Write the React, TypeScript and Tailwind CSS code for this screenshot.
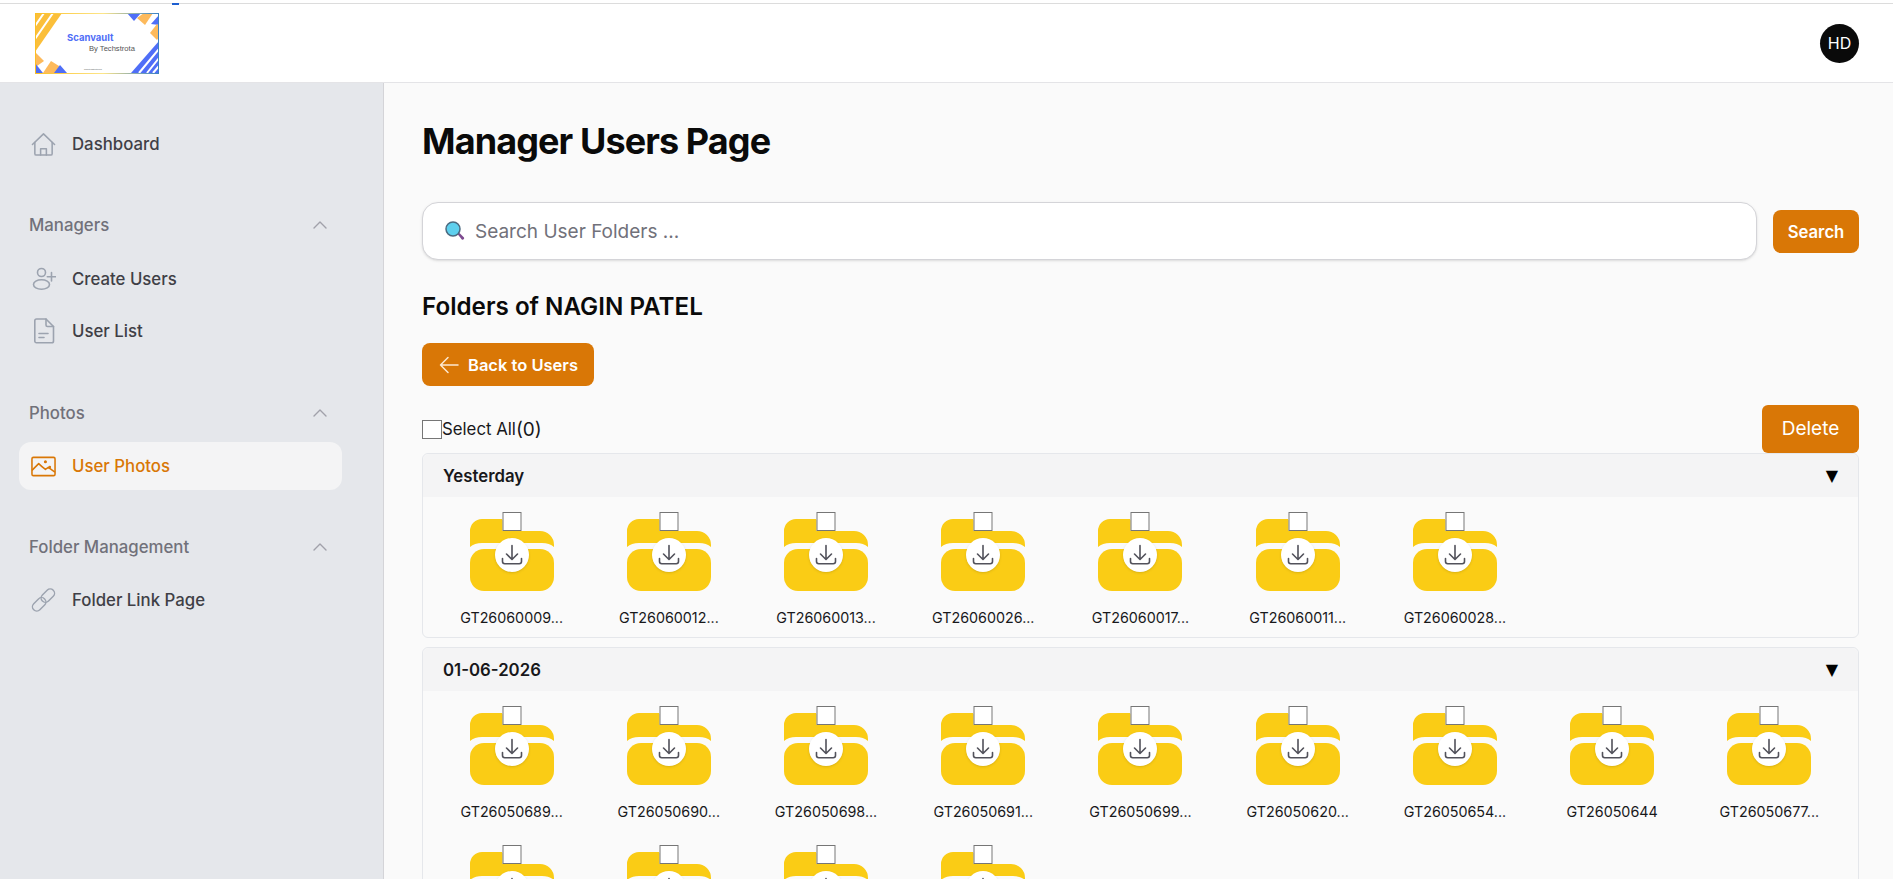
import { ChevronUp } from "lucide-react"

const INTER = "font-['Inter',sans-serif]"

function Logo() {
  return (
    <svg width="124" height="61" viewBox="0 0 124 61" className="block">
      <defs>
        <linearGradient id="edge" x1="0" y1="0" x2="1" y2="0">
          <stop offset="0" stopColor="#fbbf24" />
          <stop offset="0.55" stopColor="#fde68a" />
          <stop offset="1" stopColor="#3b82c4" />
        </linearGradient>
      </defs>
      <rect width="124" height="61" fill="white" />
      {/* yellow corner */}
      <path d="M0 0H27L0 39Z" fill="#fbbf3a" />
      <path d="M0 13L9 0M0 26L18 0" stroke="white" strokeWidth="2" />
      <path d="M0 39L9 48L2 53L0 51Z" fill="#fdba5c" />
      {/* bottom-left shapes */}
      <path d="M0 50L8 60H0Z" fill="#4f6ef7" />
      <path d="M8 60L16 48L24 53L28 60Z" fill="#fdba5c" />
      <path d="M19 60L25 52L32 60Z" fill="#4f6ef7" />
      {/* top-right shapes */}
      <path d="M92 0H106L99 8Z" fill="#4f6ef7" />
      <path d="M102 5L109 0H118L110 12Z" fill="#fdba5c" />
      <path d="M116 11L124 2V12Z" fill="#4f6ef7" />
      <path d="M115 20L122 11L124 13V24L122 27Z" fill="#fdba5c" />
      {/* blue corner */}
      <path d="M124 28V60H96Z" fill="#4f6ef7" />
      <path d="M124 36L104 60M124 45L112 60M124 53L118 60" stroke="white" strokeWidth="2" />
      <rect x="0.5" y="0.5" width="123" height="60" fill="none" stroke="url(#edge)" />
      <text x="32" y="28" fontSize="9.5" fontWeight="700" fill="#4f6ef7" fontFamily="Inter, sans-serif">Scanvault</text>
      <text x="54" y="38" fontSize="7.6" fontWeight="500" fill="#555" fontFamily="Liberation Sans, sans-serif">By Techstrota</text>
      <text x="49" y="57" fontSize="2" fill="#555" fontFamily="Liberation Sans, sans-serif">www.techstrota.com</text>
    </svg>
  )
}

function HomeIcon() {
  return (
    <svg width="26" height="25" viewBox="0 0 26 25" fill="none" stroke="#9ca3af" strokeWidth="1.6" strokeLinejoin="round" strokeLinecap="round">
      <path d="M1.5 12.5L13 1.5L24.5 12.5" />
      <path d="M4 10.5V22C4 23 4.6 23.5 5.5 23.5H20.5C21.4 23.5 22 23 22 22V10.5" />
      <path d="M10 23.5V17H16V23.5" />
    </svg>
  )
}

function UserPlusIcon() {
  return (
    <svg width="24" height="24" viewBox="0 0 24 24" fill="none" stroke="#9ca3af" strokeWidth="1.6" strokeLinecap="round">
      <circle cx="9.5" cy="5.5" r="4" />
      <ellipse cx="9.5" cy="17.5" rx="8" ry="4.7" />
      <path d="M19.5 5.500V14M15.300 9.700H23.500" />
    </svg>
  )
}

function FileIcon() {
  return (
    <svg width="24" height="26" viewBox="0 0 24 26" fill="none" stroke="#9ca3af" strokeWidth="1.6" strokeLinecap="round" strokeLinejoin="round">
      <path d="M4.500 1H14L21.500 8.500V23C21.500 24 20.800 24.800 19.800 24.800H4.500C3.500 24.800 2.800 24 2.800 23V2.800C2.800 1.800 3.500 1 4.500 1Z" />
      <path d="M14 1V7C14 8 14.800 8.500 15.500 8.500H21.500" />
      <path d="M7 15.500H16M7 19.500H12" />
    </svg>
  )
}

function PhotoIcon() {
  return (
    <svg width="26" height="21" viewBox="0 0 26 21" fill="none" stroke="#d97706" strokeWidth="1.6" strokeLinecap="round" strokeLinejoin="round">
      <rect x="1" y="1" width="24" height="19" rx="1.500" />
      <path d="M1.500 14L8 7.500C9 8.500 13 12 15 13.500M15 13.500L18 11.500L24.500 16" />
      <circle cx="15" cy="5.500" r="0.800" fill="#d97706" />
      <circle cx="19.500" cy="11" r="0.600" fill="#d97706" />
    </svg>
  )
}

function LinkIcon() {
  return (
    <svg width="26" height="26" viewBox="0 0 26 26" fill="none" stroke="#9ca3af" strokeWidth="1.5">
      <rect x="9.500" y="4" width="16" height="9" rx="4.500" transform="rotate(-45 17.500 8.500)" />
      <rect x="0.500" y="13" width="16" height="9" rx="4.500" transform="rotate(-45 8.500 17.500)" />
    </svg>
  )
}

function SearchEmoji() {
  return (
    <svg width="20" height="20" viewBox="0 0 20 20" className="shrink-0">
      <path d="M12.500 13L14.500 12L19 16.500C19.800 17.500 18 19.500 16.800 18.600Z" fill="#7d4a8f" />
      <circle cx="8" cy="8" r="7" fill="#5ed0ee" stroke="#4b6a80" strokeWidth="1.500" />
    </svg>
  )
}

function ArrowLeft() {
  return (
    <svg width="20" height="18" viewBox="0 0 20 18" fill="none" stroke="#fde8d0" strokeWidth="1.500" strokeLinecap="round" strokeLinejoin="round">
      <path d="M19 9H1.500M9 1.500L1.500 9L9 16.500" />
    </svg>
  )
}

function Folder({ name }: { name?: string }) {
  return (
    <div className="relative flex flex-col items-center pt-[22px]">
      <input type="checkbox" className="absolute top-[15px] left-1/2 z-10 h-[19px] w-[19px] translate-x-[-9.5px] appearance-none border border-[#767676] bg-white" />
      <div className="relative h-[72px] w-[84px]">
        <svg width="84" height="72" viewBox="0 0 84 72" className="block">
          <path d="M0 28V12A12 12 0 0 1 12 0H32L40 12H70A14 14 0 0 1 84 26V28C81 25.500 77 24 72 24H12C7 24 3 25.500 0 28Z" fill="#facc15" />
          <rect y="30" width="84" height="42" rx="14" fill="#facc15" />
        </svg>
        <div className="absolute left-[25px] top-[19px] flex h-[34px] w-[34px] items-center justify-center rounded-full bg-white shadow-sm">
          <svg width="24" height="24" viewBox="0 0 24 24" fill="none" stroke="#52525b" strokeWidth="1.600" strokeLinecap="round" strokeLinejoin="round">
            <path d="M2.500 15.500V18.500C2.500 20 3.500 20.700 4.800 20.700H19.200C20.500 20.700 21.500 20 21.500 18.500V15.500" />
            <path d="M12 2.500V16M6.500 11L12 16.500L17.500 11" />
          </svg>
        </div>
      </div>
      {name && <p className="mt-[17px] text-center text-[14.3px] leading-5 text-[#18181b]">{name}</p>}
    </div>
  )
}

function Section({ title, folders }: { title: string; folders: (string | undefined)[] }) {
  return (
    <div className="mb-[9px] rounded-md border border-gray-200 bg-[#fafafa]">
      <div className="flex h-[43px] items-center justify-between rounded-t-md bg-[#f4f4f5] px-[20px]">
        <span className="pt-[2px] text-[16.8px] font-semibold text-[#18181b]">{title}</span>
        <span className="font-['DejaVu_Sans',sans-serif] text-base leading-none text-black">▼</span>
      </div>
      <div className="grid grid-cols-9 gap-y-2 px-[10px] pb-[9px]">
        {folders.map((f, i) => (
          <Folder key={i} name={f} />
        ))}
      </div>
    </div>
  )
}

const yesterday = ["GT26060009...", "GT26060012...", "GT26060013...", "GT26060026...", "GT26060017...", "GT26060011...", "GT26060028..."]
// the last row's names lie below the fold
const june = [
  "GT26050689...", "GT26050690...", "GT26050698...", "GT26050691...", "GT26050699...", "GT26050620...", "GT26050654...", "GT26050644", "GT26050677...",
  undefined, undefined, undefined, undefined,
]

function NavItem({ icon, label, active }: { icon: React.ReactNode; label: string; active?: boolean }) {
  return (
    <div className={`mx-[19px] flex h-12 w-[323px] items-center gap-[16px] rounded-xl pl-[12px] text-[16.8px] font-[450] ${active ? "bg-[#f4f4f5] text-[#d97706]" : "text-[#3f3f46]"}`}>
      <span className="flex w-[25px] justify-center">{icon}</span>
      <span className="pt-[2px]">{label}</span>
    </div>
  )
}

function NavGroup({ label, className }: { label: string; className: string }) {
  return (
    <div className={`flex h-6 items-center justify-between pl-[29px] pr-[51px] text-[16.8px] font-[450] text-[#71717a] ${className}`}>
      <span className="pt-[2px]">{label}</span>
      <ChevronUp size={24} strokeWidth={1.4} className="text-[#a1a1aa]" />
    </div>
  )
}

export default function App() {
  return (
    <div className={`${INTER} flex h-screen flex-col overflow-hidden bg-[#fafafa]`}>
      <div className="relative h-1 shrink-0 border-b border-[#dcdcdc] bg-white">
        <div className="absolute left-[172px] top-[3px] h-[2px] w-[7px] bg-[#1d5fd0]" />
      </div>
      <header className="flex h-[79px] shrink-0 items-center justify-between border-b border-[#e4e4e7] bg-white pl-[35px] pr-[34px]">
        <Logo />
        <div className="flex h-[39px] w-[39px] items-center justify-center rounded-full bg-[#0a0a0a] text-base text-white">HD</div>
      </header>
      <div className="flex min-h-0 flex-1">
        <aside className="w-[384px] shrink-0 border-r border-[#d4d4d8] bg-[#e5e7eb] pt-[37px]">
          <NavItem icon={<HomeIcon />} label="Dashboard" />
          <NavGroup label="Managers" className="mb-[18px] mt-[45px]" />
          <div className="flex flex-col gap-1">
            <NavItem icon={<UserPlusIcon />} label="Create Users" />
            <NavItem icon={<FileIcon />} label="User List" />
          </div>
          <NavGroup label="Photos" className="mb-[17px] mt-[46px]" />
          <NavItem icon={<PhotoIcon />} label="User Photos" active />
          <NavGroup label="Folder Management" className="mb-[17px] mt-[45px]" />
          <NavItem icon={<LinkIcon />} label="Folder Link Page" />
        </aside>
        <main className="min-w-0 flex-1 overflow-hidden pl-[38px] pr-[34px] pt-[38px]">
          <h1 className="text-4xl font-bold leading-10 tracking-tight text-[#0a0a0a]">Manager Users Page</h1>
          <div className="mt-[41px] flex items-center gap-[16px]">
            <div className="flex h-[58px] flex-1 items-center gap-[10px] rounded-2xl border border-[#d4d4d8] bg-white pl-[22px] shadow-sm">
              <SearchEmoji />
              <span className="pt-[3px] text-[19px] text-[#71717a]">Search User Folders ...</span>
            </div>
            <button className="mt-px h-[43px] w-[86px] rounded-lg bg-[#d97706] pt-[2px] text-[16.7px] font-semibold text-white">Search</button>
          </div>
          <h2 className="mt-[31px] text-[24.2px] font-semibold leading-8 text-[#0a0a0a]">Folders of NAGIN PATEL</h2>
          <button className="mt-[20px] flex h-[43px] w-[172px] items-center gap-[9px] rounded-lg bg-[#d97706] pl-[17px] text-[16.5px] font-semibold text-white">
            <ArrowLeft />
            <span className="pt-[2px]">Back to Users</span>
          </button>
          <div className="mt-[19px] flex h-12 items-center justify-between">
            <label className="flex items-center text-[16.8px] text-[#18181b]">
              <input type="checkbox" className="h-[19px] w-[20px] appearance-none border border-[#767676] bg-white" />
              <span className="pt-[2px]">Select All</span>
              <span className="pt-[2px] text-[19px]">(0)</span>
            </label>
            <button className="h-12 w-[97px] rounded-md bg-[#d97706] text-[19px] text-white">Delete</button>
          </div>
          <Section title="Yesterday" folders={yesterday} />
          <Section title="01-06-2026" folders={june} />
        </main>
      </div>
    </div>
  )
}
